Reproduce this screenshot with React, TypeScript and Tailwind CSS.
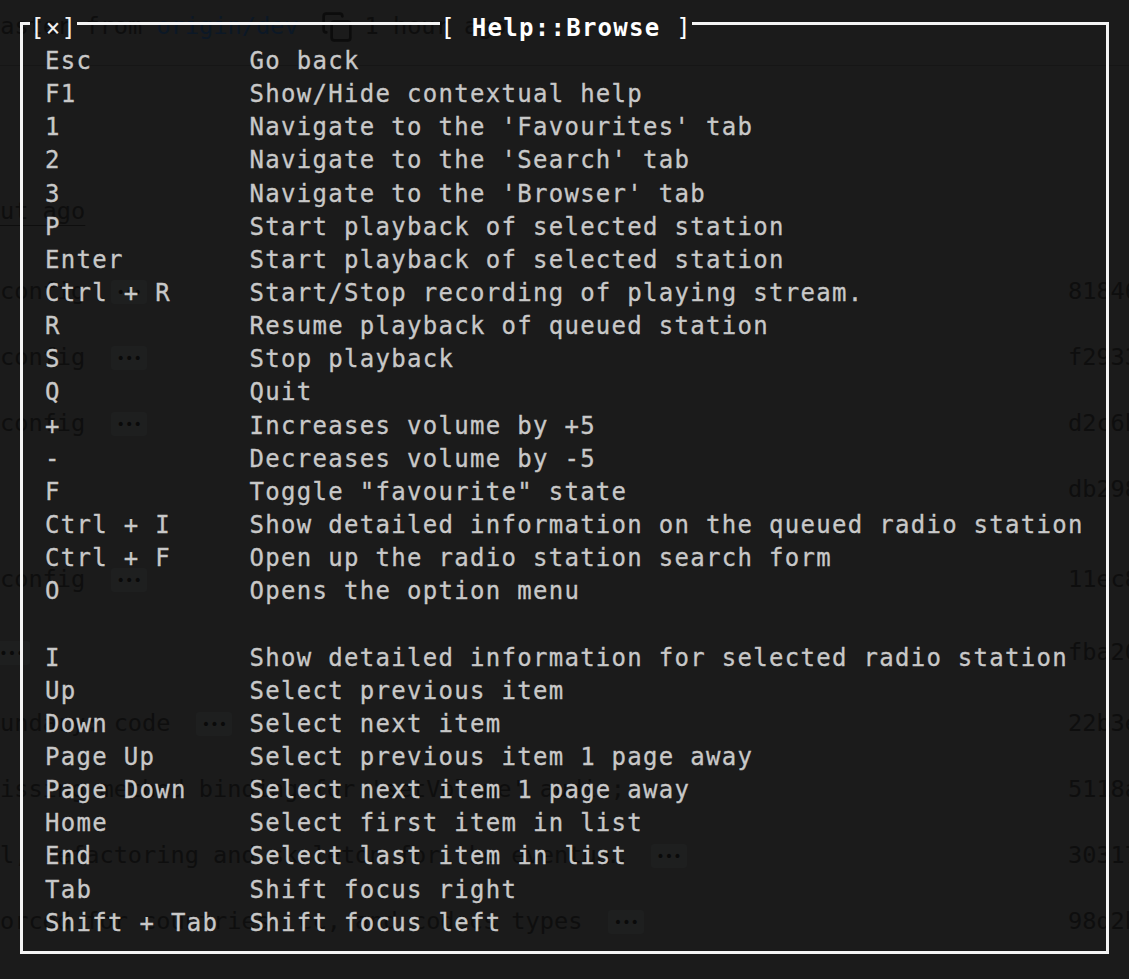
import React from 'react';
import { Copy } from 'lucide-react';

const bindings: [string, string][] = [
  ['Esc', 'Go back'],
  ['F1', 'Show/Hide contextual help'],
  ['1', "Navigate to the 'Favourites' tab"],
  ['2', "Navigate to the 'Search' tab"],
  ['3', "Navigate to the 'Browser' tab"],
  ['P', 'Start playback of selected station'],
  ['Enter', 'Start playback of selected station'],
  ['Ctrl + R', 'Start/Stop recording of playing stream.'],
  ['R', 'Resume playback of queued station'],
  ['S', 'Stop playback'],
  ['Q', 'Quit'],
  ['+', 'Increases volume by +5'],
  ['-', 'Decreases volume by -5'],
  ['F', 'Toggle "favourite" state'],
  ['Ctrl + I', 'Show detailed information on the queued radio station'],
  ['Ctrl + F', 'Open up the radio station search form'],
  ['O', 'Opens the option menu'],
  ['', ''],
  ['I', 'Show detailed information for selected radio station'],
  ['Up', 'Select previous item'],
  ['Down', 'Select next item'],
  ['Page Up', 'Select previous item 1 page away'],
  ['Page Down', 'Select next item 1 page away'],
  ['Home', 'Select first item in list'],
  ['End', 'Select last item in list'],
  ['Tab', 'Shift focus right'],
  ['Shift + Tab', 'Shift focus left'],
];

type Commit = { msg: string; more: boolean; hash: string; spacing: string; shift?: boolean };

// rows of the page behind the overlay (dimmed commit list)
const commits: Commit[] = [
  { msg: 'config', more: true, hash: '81846c3', spacing: 'mt-[14px]' },
  { msg: 'config', more: true, hash: 'f29337a', spacing: '' },
  { msg: 'config', more: true, hash: 'd2c6b1e', spacing: '' },
  { msg: '', more: false, hash: 'db298ae', spacing: '' },
  { msg: 'config', more: true, hash: '11ec8f2', spacing: 'mt-[24px]' },
  { msg: '', more: true, hash: 'fba20d4', spacing: 'mt-[7px]', shift: true },
  { msg: 'undary: code', more: true, hash: '22b3e91', spacing: 'mt-[5px]' },
  { msg: "issing method binding for 'setVolume' audio;", more: false, hash: '5118a0c', spacing: '' },
  { msg: 'l, refactoring and skeleton for the eventua…', more: true, hash: '30317fe', spacing: '' },
  { msg: 'orced for countries, cc, and codecs types', more: true, hash: '98d2b45', spacing: '' },
];

function MoreButton({ shift }: { shift?: boolean }) {
  return (
    <span
      className={`flex h-[24px] w-[36px] items-center justify-center rounded-[3px] bg-[#1e1f1f] text-[14px] leading-none text-[#0a0a0a] ${
        shift ? '-ml-[6px]' : 'ml-[26px]'
      }`}
    >
      •••
    </span>
  );
}

function BackgroundPage() {
  return (
    <div className="flex flex-col font-['DejaVu_Sans_Mono',monospace] text-[23.6px] leading-none whitespace-pre text-[#0e0e0e]">
      <div className="flex h-[54px] items-center">
        <span className="-ml-[14px]">master from </span>
        <span className="text-[#0c1826]">origin/dev</span>
        <Copy className="ml-[22px] h-[32px] w-[32px] text-[#0c0c0c]" strokeWidth={2} />
        <span className="ml-[12px]">1 hour ago</span>
      </div>
      <div className="mt-[11px] h-px bg-[#161616]" />
      <div className="mt-[113px] flex h-[66px] items-center">
        <span className="underline decoration-1 underline-offset-[6px]">ut ago</span>
      </div>
      {commits.map((c, i) => (
        <div key={i} className={`flex h-[66px] items-center ${c.spacing}`}>
          <div className="flex flex-1 items-center overflow-hidden">
            {c.msg && <span>{c.msg}</span>}
            {c.more && <MoreButton shift={c.shift} />}
          </div>
          <span className="w-[61px] shrink-0 overflow-hidden">{c.hash}</span>
        </div>
      ))}
    </div>
  );
}

function HelpOverlay() {
  return (
    <div className="absolute left-[20px] top-[22px] w-[1089px] border-x-[3px] border-b-[3px] border-[#f4f4f4] pb-[11px] font-['DejaVu_Sans_Mono',monospace] text-[24px] tracking-[1.29px] whitespace-pre">
      <div className="flex h-[21px] items-start">
        <div className="h-[3px] w-[7px] bg-[#f4f4f4]" />
        <span className="-mt-[10.5px] h-[33px] leading-[33.15px] text-[#f2f2f2]">[×]</span>
        <div className="h-[3px] w-[363px] bg-[#f4f4f4]" />
        <span className="-mt-[10.5px] h-[33px] leading-[33.15px] text-white">
          [ <span className="font-bold">Help::Browse</span> ]
        </span>
        <div className="h-[3px] flex-1 bg-[#f4f4f4]" />
      </div>
      <div className="pl-[22px] pt-[2px] leading-[33.15px] text-[#c8c8c8] [-webkit-text-stroke:0.3px_#c8c8c8]">
        {bindings.map(([key, desc], i) => (
          <div key={i} className="h-[33.15px]">
            {key ? `${key.padEnd(13)}${desc}` : ' '}
          </div>
        ))}
      </div>
    </div>
  );
}

export default function App() {
  return (
    <div className="relative h-[979px] w-[1129px] overflow-hidden bg-[#1b1b1b]">
      <BackgroundPage />
      <HelpOverlay />
    </div>
  );
}
